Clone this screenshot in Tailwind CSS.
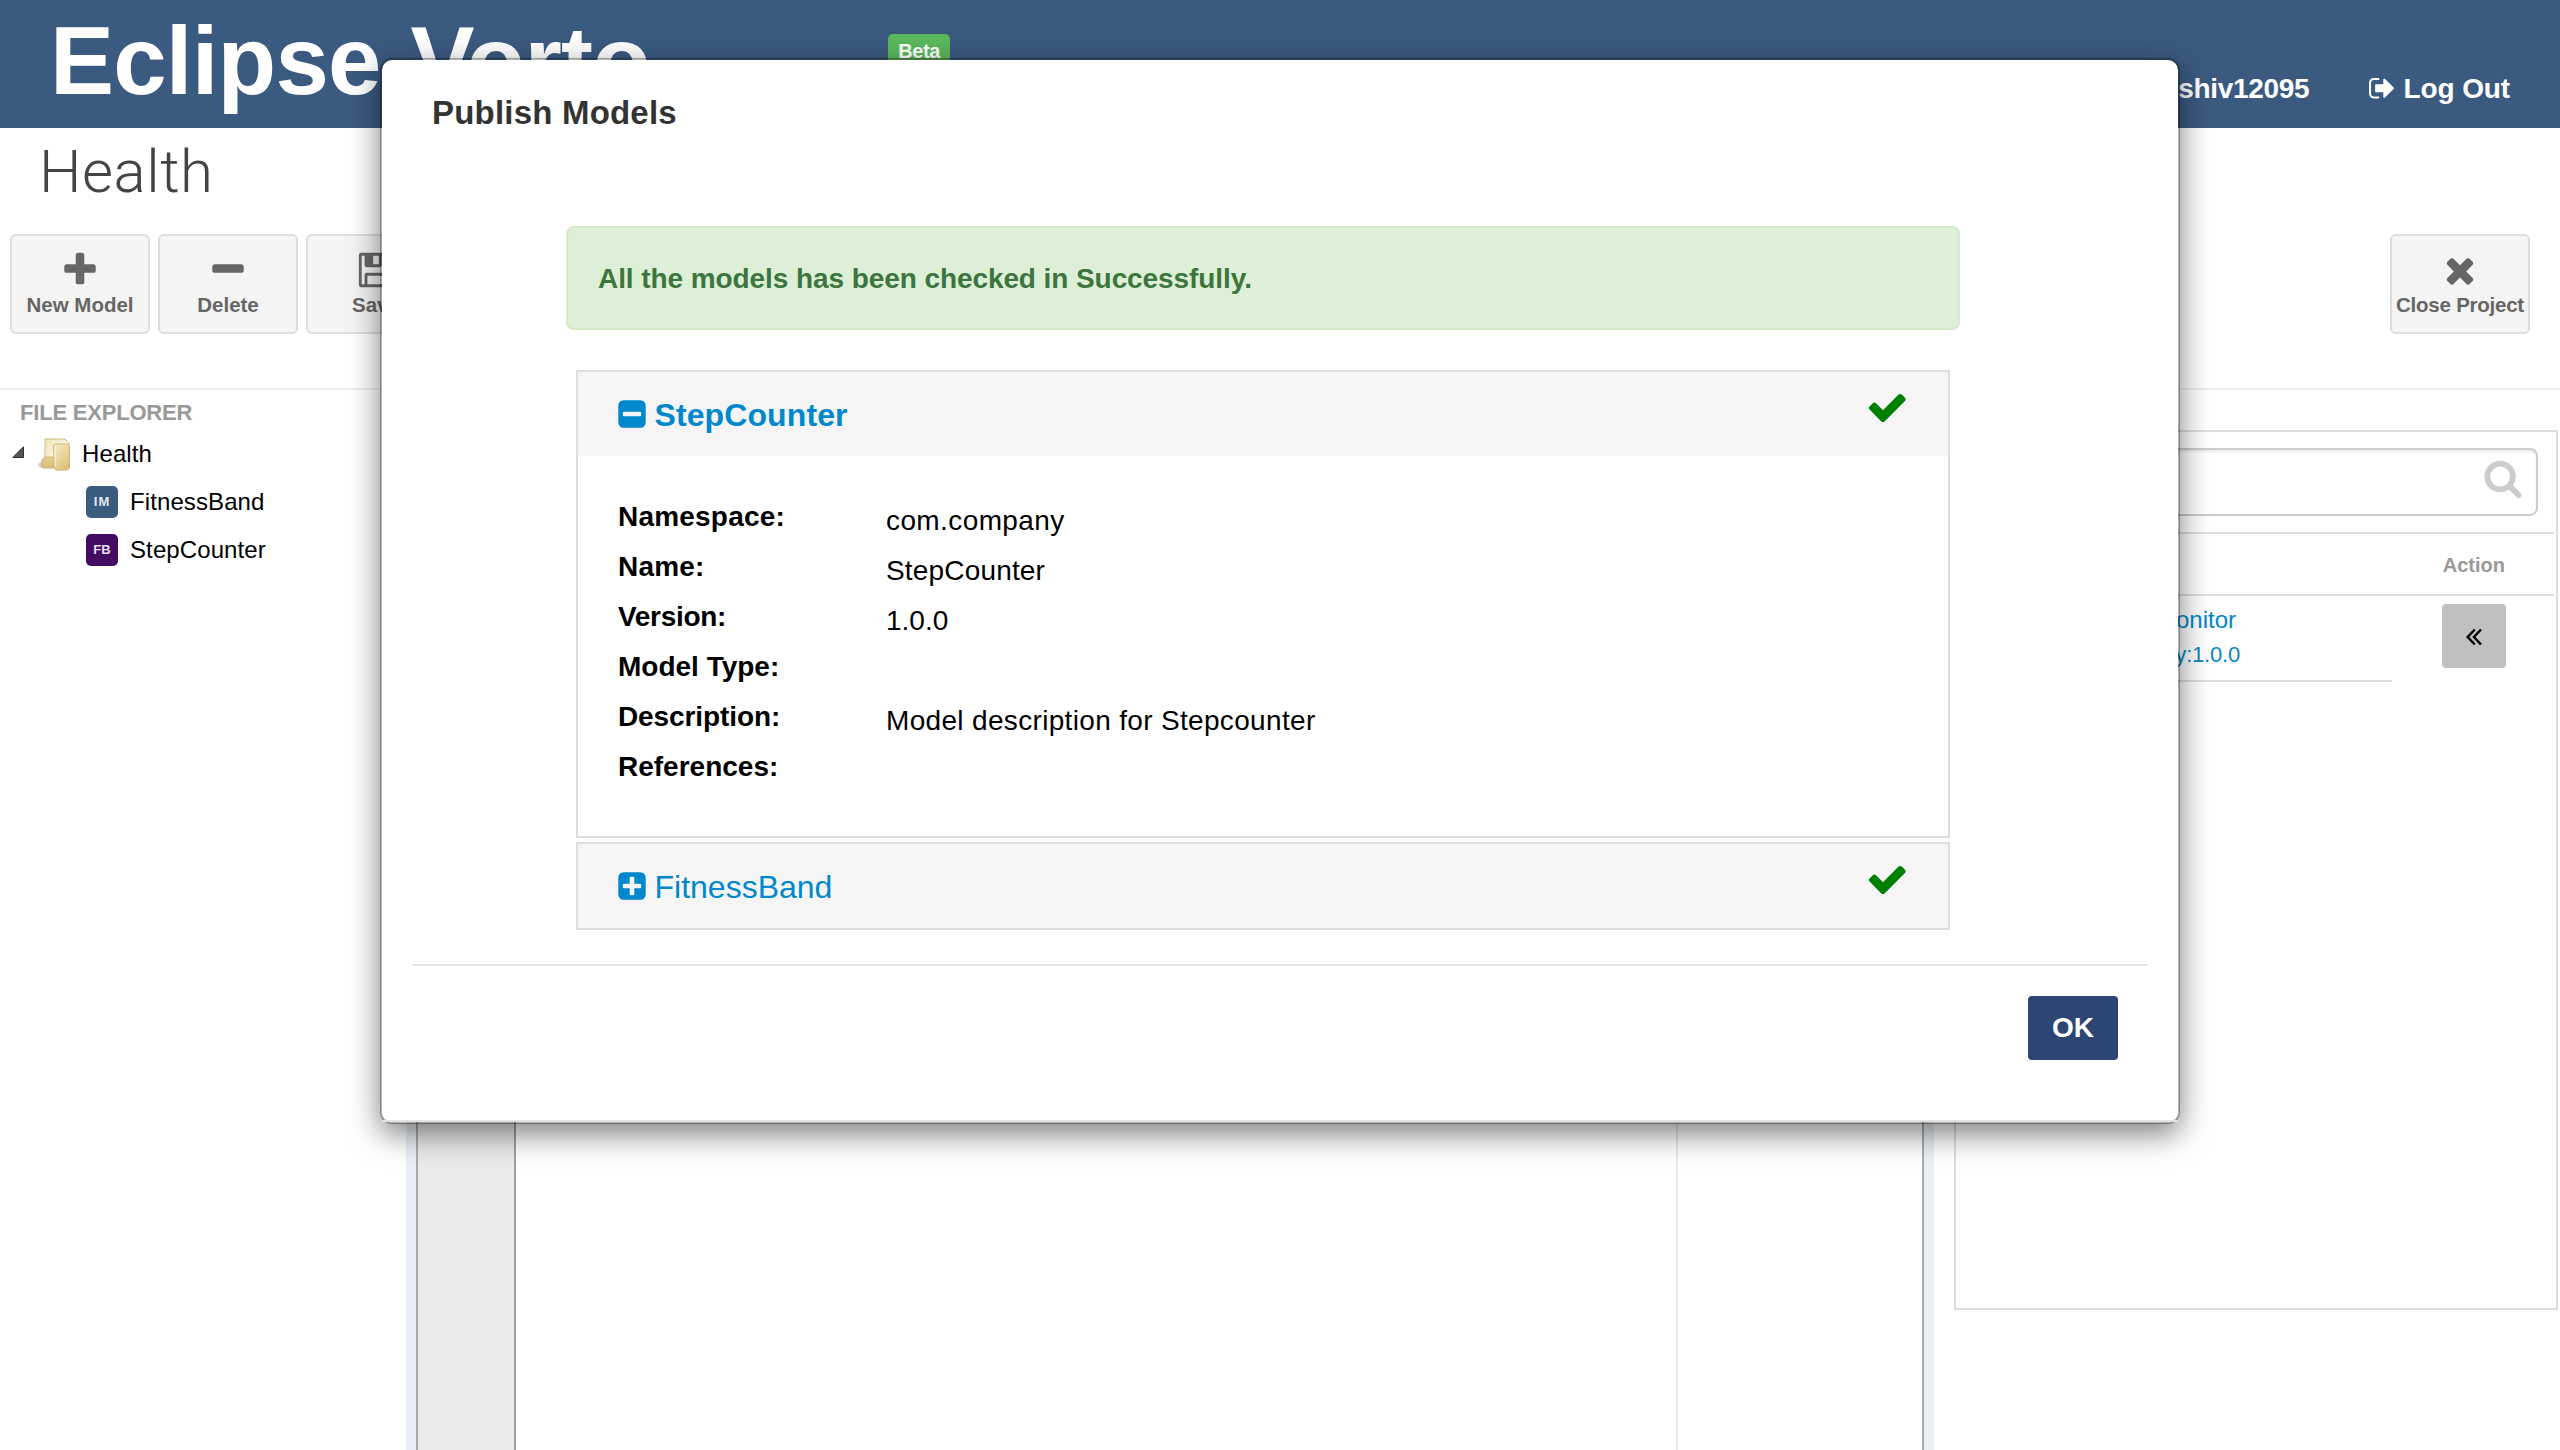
<!DOCTYPE html>
<html lang="en">
<head>
<meta charset="utf-8">
<title>Eclipse Vorto</title>
<script src="https://cdn.jsdelivr.net/npm/@tailwindcss/browser@4"></script>
</head>
<body class="relative flex h-[1450px] w-[2560px] flex-col overflow-hidden bg-white font-['Liberation_Sans',Arial,sans-serif] text-black">

<!-- Top bar -->
<header class="flex h-32 shrink-0 items-start bg-[#3b5a80] pr-[50px] pl-[50px] text-white">
  <h1 class="mt-[12px] w-[838px] text-[96px] leading-[97px] font-bold tracking-[-0.8px] whitespace-nowrap [word-spacing:4px]">Eclipse Vorto</h1>
  <span class="mt-[34px] h-9 w-[62px] rounded-[5px] bg-[#5cb85c] pt-[7px] text-center text-[20px] leading-5 font-bold tracking-[-0.4px]">Beta</span>
  <nav class="mt-[73px] ml-auto flex text-[28px] leading-8 font-bold whitespace-nowrap">
    <span class="mr-[59px] tracking-[-0.35px]">shiv12095</span>
    <a class="flex gap-[7px] tracking-[-0.13px]">
      <svg class="mt-[1px] size-[28.5px]" viewBox="0 0 1792 1792" fill="currentColor"><path d="M704 1440q0 4 1 20t.5 26.5-3 23.5-10 19.5-20.5 6.5h-320q-119 0-203.500-84.500t-84.500-203.500v-704q0-119 84.500-203.500t203.500-84.500h320q13 0 22.500 9.500t9.500 22.500q0 4 1 20t.5 26.500-3 23.500-10 19.500-20.500 6.500h-320q-66 0-113 47t-47 113v704q0 66 47 113t113 47h312l11.500 1 11.500 3 8 5.500 7 9 2 13.500zm928-544q0 26-19 45l-544 544q-19 19-45 19t-45-19-19-45v-288h-448q-26 0-45-19t-19-45v-384q0-26 19-45t45-19h448v-288q0-26 19-45t45-19 45 19l544 544q19 19 19 45z"/></svg>
      <span>Log Out</span>
    </a>
  </nav>
</header>

<!-- Project title and toolbar -->
<section class="h-[262px] shrink-0 border-b-2 border-[#eee]">
  <h2 class="h-[106px] pt-[12px] pl-[39px] font-[Roboto,sans-serif] text-[60px] leading-[64px] font-light tracking-[0.5px] text-[#444]">Health</h2>
  <div class="flex gap-2 pr-[30px] pl-[10px] text-[20.5px] leading-6 font-bold text-[#666]">
    <button class="flex h-[100px] w-[140px] flex-col items-center rounded-[6px] border-2 border-[#ddd] bg-[#f4f4f4] pt-[14px]">
      <svg class="size-10" viewBox="0 0 1792 1792" fill="currentColor"><path d="M1600 736v192q0 40-28 68t-68 28h-416v416q0 40-28 68t-68 28h-192q-40 0-68-28t-28-68v-416h-416q-40 0-68-28t-28-68v-192q0-40 28-68t68-28h416v-416q0-40 28-68t68-28h192q40 0 68 28t28 68v416h416q40 0 68 28t28 68z"/></svg>
      <span class="mt-[3px]">New Model</span>
    </button>
    <button class="flex h-[100px] w-[140px] flex-col items-center rounded-[6px] border-2 border-[#ddd] bg-[#f4f4f4] pt-[14px]">
      <svg class="size-10" viewBox="0 0 1792 1792" fill="currentColor"><path d="M1600 736v192q0 40-28 68t-68 28h-1216q-40 0-68-28t-28-68v-192q0-40 28-68t68-28h1216q40 0 68 28t28 68z"/></svg>
      <span class="mt-[3px]">Delete</span>
    </button>
    <button class="flex h-[100px] w-[140px] flex-col items-center rounded-[6px] border-2 border-[#ddd] bg-[#f4f4f4] pt-[14px]">
      <svg class="size-10" viewBox="0 0 1792 1792" fill="currentColor"><path d="M512 1536h768v-384h-768v384zm896 0h128v-896q0-14-10-38.500t-20-34.500l-281-281q-10-10-34-20t-39-10v416q0 40-28 68t-68 28h-576q-40 0-68-28t-28-68v-416h-128v1280h128v-416q0-40 28-68t68-28h832q40 0 68 28t28 68v416zm-384-928v-320q0-13-9.500-22.500t-22.500-9.500h-192q-13 0-22.500 9.500t-9.500 22.500v320q0 13 9.500 22.500t22.500 9.500h192q13 0 22.500-9.500t9.500-22.500zm640 32v928q0 40-28 68t-68 28h-1344q-40 0-68-28t-28-68v-1344q0-40 28-68t68-28h928q40 0 88 20t76 48l280 280q28 28 48 76t20 88z"/></svg>
      <span class="mt-[3px]">Save</span>
    </button>
    <button class="ml-auto flex h-[100px] w-[140px] flex-col items-center rounded-[6px] border-2 border-[#ddd] bg-[#f4f4f4] pt-[14px]">
      <svg class="size-10" viewBox="0 0 1792 1792" fill="currentColor"><path d="M1490 1322q0 40-28 68l-136 136q-28 28-68 28t-68-28l-294-294-294 294q-28 28-68 28t-68-28l-136-136q-28-28-28-68t28-68l294-294-294-294q-28-28-28-68t28-68l136-136q28-28 68-28t68 28l294 294 294-294q28-28 68-28t68 28l136 136q28 28 28 68t-28 68l-294 294 294 294q28 28 28 68z"/></svg>
      <span class="mt-[3px] tracking-[-0.24px] whitespace-nowrap">Close Project</span>
    </button>
  </div>
</section>

<main class="flex min-h-0 flex-1">
  <!-- File explorer -->
  <aside class="w-[406px] shrink-0 pt-[11px]">
    <h3 class="mb-[5px] pl-5 text-[22px] leading-6 font-bold tracking-[-0.2px] text-[#999]">FILE EXPLORER</h3>
    <ul class="text-[24px] tracking-[0.1px]">
      <li class="flex h-12 items-center pl-3">
        <svg class="mr-[14px] mb-[4px] size-3" viewBox="0 0 12 12"><path d="M11.500 .8V11.500H.8z" fill="#555" stroke="#2e2e2e"/></svg>
        <svg class="mr-[11px] size-[33px]" viewBox="0 0 33 33">
          <defs>
            <linearGradient id="fa" x1="0" x2="1" y2="1"><stop stop-color="#f0e3b8"/><stop offset=".5" stop-color="#faf4df"/><stop offset="1" stop-color="#d6b974"/></linearGradient>
            <linearGradient id="fb" x1="0" x2=".6" y2="1"><stop stop-color="#f6ebc6"/><stop offset="1" stop-color="#dfc380"/></linearGradient>
            <linearGradient id="fc" x1="0" x2="0" y2="1"><stop stop-color="#e6d093"/><stop offset="1" stop-color="#d8bd78"/></linearGradient>
          </defs>
          <ellipse cx="4" cy="27" rx="4" ry="3" fill="#bbb" opacity=".6"/>
          <path d="M7 1H27l4 4V29H15L7 26V2z" fill="url(#fa)" stroke="#d3ba7e"/>
          <path d="M4 21.500 7 19h8l1 11H5l-1.500-1.500z" fill="url(#fc)" stroke="#cdb272"/>
          <path d="M15.500 7.500 17 6H29.500l2 2.500V30l-2 2H18l-1.500-2z" fill="url(#fb)" stroke="#d0b370"/>
          <path d="M17 8V29" stroke="#fffbe9"/>
        </svg>
        Health
      </li>
      <li class="flex h-12 items-center pl-[86px]"><span class="mr-3 flex size-8 items-center justify-center rounded-[5px] bg-[#3b5a80] pb-[1px] text-[13px] font-bold tracking-[1px] text-[#e4e9ef]">IM</span>FitnessBand</li>
      <li class="flex h-12 items-center pl-[86px]"><span class="mr-3 flex size-8 items-center justify-center rounded-[5px] bg-[#440c60] pb-[1px] text-[13px] font-bold text-[#e6dfea]">FB</span>StepCounter</li>
    </ul>
  </aside>

  <!-- Editor between its two splitters -->
  <div class="w-[10px] shrink-0 bg-[#ebeff3]"></div>
  <section class="flex w-[1508px] shrink-0 border-x-2 border-[#aaa]">
    <div class="w-[98px] border-r-2 border-[#a0a0a0] bg-[#eaeaea]"></div>
    <div class="w-[1162px] border-r-2 border-[#e8e8e8]"></div>
  </section>
  <div class="w-[10px] shrink-0 bg-[#ebeff3]"></div>

  <!-- Model repository -->
  <aside class="mt-10 ml-5 h-[880px] w-[604px] shrink-0 border-2 border-[#ddd] pr-[2px]">
    <div class="px-4 py-4">
      <div class="flex h-[68px] justify-end rounded-[8px] border-2 border-[#ccc] pt-2 pr-[13px] text-[#ccc] shadow-[inset_0_2px_2px_rgba(0,0,0,0.075)]">
        <svg class="size-10" viewBox="0 0 1792 1792" fill="currentColor"><path d="M1216 832q0-185-131.500-316.500t-316.500-131.500-316.500 131.500-131.500 316.500 131.500 316.500 316.500 131.500 316.500-131.500 131.500-316.500zm512 832q0 52-38 90t-90 38q-54 0-90-38l-343-342q-179 124-399 124-143 0-273.500-55.500t-225-150-150-225-55.500-273.500 55.500-273.500 150-225 225-150 273.500-55.500 273.500 55.500 225 150 150 225 55.500 273.500q0 220-124 399l343 343q37 37 37 90z"/></svg>
      </div>
    </div>
    <div class="flex h-16 items-center justify-end border-y-2 border-[#ddd] pt-[2px] pr-[49px] text-[20px] font-bold text-[#999]">Action</div>
    <div class="flex justify-between pr-12">
      <div class="h-[86px] w-[436px] border-b-2 border-[#ddd] pt-[7px] text-[#08c]">
        <p class="w-[280px] text-right text-[24px] leading-[34px]">Monitor</p>
        <p class="mt-[1px] w-[284px] text-right text-[22px] leading-[34px] tracking-[-0.2px]">com.company:1.0.0</p>
      </div>
      <button class="mt-2 flex size-16 items-center justify-center rounded-[4px] bg-[#c0c0c0]">
        <svg class="mt-[2px] h-[18px] w-4" viewBox="0 0 16 18" fill="none" stroke="#000" stroke-width="2.400"><path d="M8.800 1.500 1.700 9l7.100 7.500M15 1.500 7.900 9l7.100 7.500"/></svg>
      </button>
    </div>
  </aside>
</main>

<!-- Publish dialog -->
<div class="absolute top-[58px] left-[380px] h-[1066px] w-[1800px] rounded-[12px] border-2 border-black/30 bg-white bg-clip-padding shadow-[0_10px_30px_rgba(0,0,0,0.5)]">
  <div class="flex h-[1062px] flex-col border-b-2 border-[#e2e2e2]">
    <h4 class="mt-[33px] ml-[50px] text-[33px] leading-10 font-bold tracking-[0.2px] text-[#333]">Publish Models</h4>
    <div class="mt-[93px] ml-[184px] flex h-[104px] w-[1394px] items-center rounded-[8px] border-2 border-[#d6e9c6] bg-[#deefd8] pt-[2px] pl-[30px] text-[28px] font-bold tracking-[-0.08px] text-[#3c763d]">All the models has been checked in Successfully.</div>

    <section class="mt-10 ml-[194px] h-[468px] w-[1374px] border-2 border-[#ddd]">
      <div class="flex h-[84px] items-start bg-[#f5f5f5] pt-[13.5px] pr-[40px] pl-[37.5px]">
        <svg class="mt-[12.5px] mr-[7px] size-8" viewBox="0 0 1792 1792" fill="#08c"><path d="M1408 960v-128q0-26-19-45t-45-19h-896q-26 0-45 19t-19 45v128q0 26 19 45t45 19h896q26 0 45-19t19-45zm256-544v960q0 119-84.500 203.500t-203.500 84.500h-960q-119 0-203.500-84.500t-84.500-203.500v-960q0-119 84.500-203.500t203.500-84.500h960q119 0 203.500 84.500t84.500 203.500z"/></svg>
        <a class="mt-[9.5px] text-[32px] leading-10 font-bold tracking-[0.1px] text-[#08c]">StepCounter</a>
        <svg class="ml-auto size-[42.5px]" viewBox="0 0 1792 1792" fill="#008000"><path d="M1671 566q0 40-28 68l-724 724-136 136q-28 28-68 28t-68-28l-136-136-362-362q-28-28-28-68t28-68l136-136q28-28 68-28t68 28l294 295 656-657q28-28 68-28t68 28l136 136q28 28 28 68z"/></svg>
      </div>
      <dl class="grid auto-rows-[50px] grid-cols-[268px_1fr] pt-[36px] pl-[40px] text-[28px] leading-[50px]">
        <dt class="font-bold tracking-[0.2px]">Namespace:</dt><dd class="pt-1 tracking-[0.4px]">com.company</dd>
        <dt class="font-bold tracking-[0.2px]">Name:</dt><dd class="pt-1 tracking-[0.17px]">StepCounter</dd>
        <dt class="font-bold tracking-[-0.3px]">Version:</dt><dd class="pt-1">1.0.0</dd>
        <dt class="font-bold">Model Type:</dt><dd></dd>
        <dt class="font-bold tracking-[-0.1px]">Description:</dt><dd class="pt-1 tracking-[0.33px]">Model description for Stepcounter</dd>
        <dt class="font-bold">References:</dt><dd></dd>
      </dl>
    </section>

    <section class="mt-1 ml-[194px] h-[88px] w-[1374px] border-2 border-[#ddd]">
      <div class="flex h-[84px] items-start bg-[#f5f5f5] pt-[13.5px] pr-[40px] pl-[37.5px]">
        <svg class="mt-[12.5px] mr-[7px] size-8" viewBox="0 0 1792 1792" fill="#08c"><path d="M1408 960v-128q0-26-19-45t-45-19h-320v-320q0-26-19-45t-45-19h-128q-26 0-45 19t-19 45v320h-320q-26 0-45 19t-19 45v128q0 26 19 45t45 19h320v320q0 26 19 45t45 19h128q26 0 45-19t19-45v-320h320q26 0 45-19t19-45zm256-544v960q0 119-84.500 203.500t-203.500 84.500h-960q-119 0-203.500-84.500t-84.500-203.500v-960q0-119 84.500-203.500t203.500-84.500h960q119 0 203.500 84.500t84.500 203.500z"/></svg>
        <a class="mt-[9.5px] text-[32px] leading-10 text-[#08c]">FitnessBand</a>
        <svg class="ml-auto size-[42.5px]" viewBox="0 0 1792 1792" fill="#008000"><path d="M1671 566q0 40-28 68l-724 724-136 136q-28 28-68 28t-68-28l-136-136-362-362q-28-28-28-68t28-68l136-136q28-28 68-28t68 28l294 295 656-657q28-28 68-28t68 28l136 136q28 28 28 68z"/></svg>
      </div>
    </section>

    <footer class="mx-[30px] mt-[34px] flex justify-end border-t-2 border-[#e5e5e5] pt-[30px] pr-[30px]">
      <button class="h-16 w-[90px] rounded-[4px] bg-[#2d4572] text-[28px] font-bold text-white">OK</button>
    </footer>
  </div>
</div>
</body>
</html>
